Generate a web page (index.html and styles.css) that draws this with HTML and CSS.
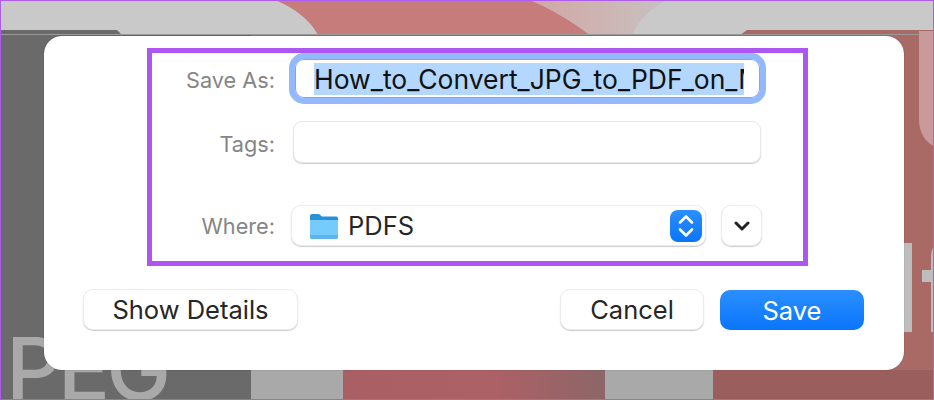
FILE: index.html
```html
<!DOCTYPE html>
<html lang="en">
<head>
    <meta charset="UTF-8">
    <title>Save As</title>
    <link rel="stylesheet" href="styles.css">
</head>
<body>

    <!-- blurred document behind the sheet -->
    <svg class="backdrop" width="934" height="400" viewBox="0 0 934 400">
        <defs>
            <linearGradient id="redFade" x1="0" y1="0" x2="1" y2="0">
                <stop offset="0" stop-color="#a95f63"/>
                <stop offset="0.6" stop-color="#ab6166"/>
                <stop offset="1" stop-color="#8c6668"/>
            </linearGradient>
            <linearGradient id="bandFade" x1="0" y1="0" x2="1" y2="0">
                <stop offset="0" stop-color="#d0a8a4"/>
                <stop offset="1" stop-color="#c9c0c0"/>
            </linearGradient>
        </defs>
        <rect width="934" height="400" fill="#a96a66"/>
        <rect x="0" y="30" width="251" height="370" fill="#6a6a6a"/>
        <rect x="0" y="0" width="934" height="35" fill="#c9c9c9"/>
        <path d="M0 30H117L122 35H0Z" fill="#6a6a6a"/>
        <path d="M275 0C295 8 310 20 318 35H590C570 20 550 8 530 0Z" fill="#c77c7c"/>
        <path d="M530 0C550 8 570 20 590 35H632C640 18 652 8 667 0Z" fill="url(#bandFade)"/>
        <path d="M740 35L747 30H934V35Z" fill="#a96a66"/>
        <rect x="0" y="34" width="934" height="1" fill="#9a9a9a"/>
        <path d="M919 31H934V146C925 142 919 132 919 120Z" fill="#c89a9a"/>
        <rect x="904" y="243" width="8" height="89" fill="#bdbdbd"/>
        <path d="M922 270H931V258Q931 250 934 246V332H931V282H922Z" fill="#bdbdbd"/>
        <rect x="251" y="370" width="92" height="30" fill="#a9a9a9"/>
        <rect x="343" y="370" width="262" height="30" fill="url(#redFade)"/>
        <rect x="605" y="370" width="108" height="30" fill="#a9a9a9"/>
        <rect x="713" y="370" width="221" height="30" fill="#9a5f5d"/>
        <text x="6" y="400" class="backdrop-text">PEG</text>
    </svg>

    <div class="dialog">
        <div class="highlight">
            <div class="row row-name">
                <label class="row-label">Save As:</label>
                <div class="name-field">
                    <span class="selected-text">How_to_Convert_JPG_to_PDF_on_Mac</span>
                </div>
            </div>

            <div class="row row-tags">
                <label class="row-label">Tags:</label>
                <div class="tags-field"></div>
            </div>

            <div class="row row-where">
                <label class="row-label">Where:</label>
                <div class="where-select">
                    <svg class="folder" width="30" height="28" viewBox="0 0 30 28">
                        <path d="M1 4a2 2 0 0 1 2-2h7l3 2.500h14a2 2 0 0 1 2 2V10H1Z" fill="#2b8fd6"/>
                        <path d="M1 8h28v17a2 2 0 0 1-2 2H3a2 2 0 0 1-2-2Z" fill="#74cbfc"/>
                        <path d="M1 23h28v2a2 2 0 0 1-2 2H3a2 2 0 0 1-2-2Z" fill="#5cb4ec"/>
                    </svg>
                    <span class="where-name">PDFS</span>
                    <span class="stepper">
                        <svg width="18" height="26" viewBox="0 0 18 26" fill="none" stroke="#fff" stroke-width="2.600" stroke-linecap="round" stroke-linejoin="round">
                            <path d="M3 9.500L9 3.500L15 9.500"/>
                            <path d="M3 16.500L9 22.500L15 16.500"/>
                        </svg>
                    </span>
                </div>
                <button class="expand-button">
                    <svg width="16" height="10" viewBox="0 0 16 10" fill="none" stroke="#222" stroke-width="3" stroke-linecap="round" stroke-linejoin="round">
                        <path d="M2 2L8 8L14 2"/>
                    </svg>
                </button>
            </div>
        </div>

        <div class="footer">
            <button class="button details-button">Show Details</button>
            <div class="footer-right">
                <button class="button cancel-button">Cancel</button>
                <button class="button save-button">Save</button>
            </div>
        </div>
    </div>

</body>
</html>
```

FILE: styles.css
```css
html, body {
    margin: 0;
    padding: 0;
}
body {
    position: relative;
    width: 934px;
    height: 400px;
    overflow: hidden;
    font-family: Inter, "Liberation Sans", sans-serif;
    background-color: #a96a66;
}
/* thin purple line round the whole picture */
body::after {
    content: "";
    position: absolute;
    inset: 0;
    border: 1px solid #ae5cf0;
}
.backdrop {
    position: absolute;
    top: 0;
    left: 0;
}
.backdrop-text {
    font-family: Inter, sans-serif;
    font-size: 87px;
    font-weight: 500;
    letter-spacing: -4px;
    fill: #a9a9a9;
}
.dialog {
    position: relative;
    box-sizing: border-box;
    width: 860px;
    height: 334px;
    margin-left: 44px;
    top: 36px;
    padding-top: 12px;
    background: #fff;
    border-radius: 18px;
    box-shadow: 0 0 1px rgba(0, 0, 0, 0.5);
}
.highlight {
    box-sizing: border-box;
    width: 661px;
    height: 218px;
    margin-left: 103px;
    border: 5px solid #ae56f2;
}
.row {
    display: flex;
    align-items: center;
}
.row-tags {
    margin-top: 17px;
}
.row-where {
    margin-top: 42px;
}
.row-label {
    width: 123px;
    text-align: right;
    font-size: 21.700px;
    color: #858585;
}
.row-name .row-label {
    padding-top: 2px;
}
.row-tags .row-label {
    padding-top: 3px;
}
.name-field {
    box-sizing: border-box;
    display: flex;
    align-items: center;
    width: 477px;
    height: 51px;
    margin-left: 14px;
    padding-left: 19px;
    border: 6px solid #93b8fb;
    border-radius: 15px;
    background: #fff;
    box-shadow: inset 0 0 0 1px #7ea6f5;
}
.selected-text {
    display: block;
    width: 430px;
    height: 32px;
    overflow: hidden;
    white-space: nowrap;
    font-size: 26.500px;
    line-height: 32px;
    color: #111;
    background: #b3d7ff;
}
.tags-field {
    box-sizing: border-box;
    width: 468px;
    height: 42px;
    margin-left: 18px;
    border: 1px solid #e8e8e8;
    border-radius: 9px;
    background: #fff;
    box-shadow: 0 1px 1px rgba(0, 0, 0, 0.2);
}
.where-select {
    box-sizing: border-box;
    display: flex;
    align-items: center;
    width: 415px;
    height: 41px;
    margin-left: 16px;
    padding-left: 17px;
    padding-right: 3px;
    border: 1px solid #ececec;
    border-radius: 10px;
    background: #fff;
    box-shadow: 0 1px 1px rgba(0, 0, 0, 0.2);
}
.folder {
    flex: none;
}
.where-name {
    flex: 1;
    margin-left: 9px;
    font-size: 25.500px;
    color: #262626;
}
.stepper {
    display: flex;
    align-items: center;
    justify-content: center;
    width: 32px;
    height: 32px;
    border-radius: 8px;
    background: linear-gradient(#2b8fff, #0a75fb);
}
.expand-button {
    box-sizing: border-box;
    display: flex;
    align-items: center;
    justify-content: center;
    width: 41px;
    height: 41px;
    margin-left: 15px;
    padding: 0;
    border: 1px solid #ececec;
    border-radius: 10px;
    background: #fff;
    box-shadow: 0 1px 1px rgba(0, 0, 0, 0.2);
}
.footer {
    display: flex;
    justify-content: space-between;
    margin-top: 23px;
    padding: 0 40px 0 39px;
}
.footer-right {
    display: flex;
    gap: 16px;
}
.button {
    box-sizing: border-box;
    height: 41px;
    padding: 0;
    font-family: Inter, "Liberation Sans", sans-serif;
    font-size: 25.500px;
    color: #262626;
    border: 1px solid #ececec;
    border-radius: 10px;
    background: #fff;
    box-shadow: 0 1px 1px rgba(0, 0, 0, 0.2);
}
.details-button {
    width: 215px;
}
.cancel-button {
    width: 144px;
}
.save-button {
    width: 144px;
    height: 40px;
    margin-top: 1px;
    color: #fff;
    border: none;
    box-shadow: none;
    background: linear-gradient(#2b8fff, #0a75fb);
}
```
